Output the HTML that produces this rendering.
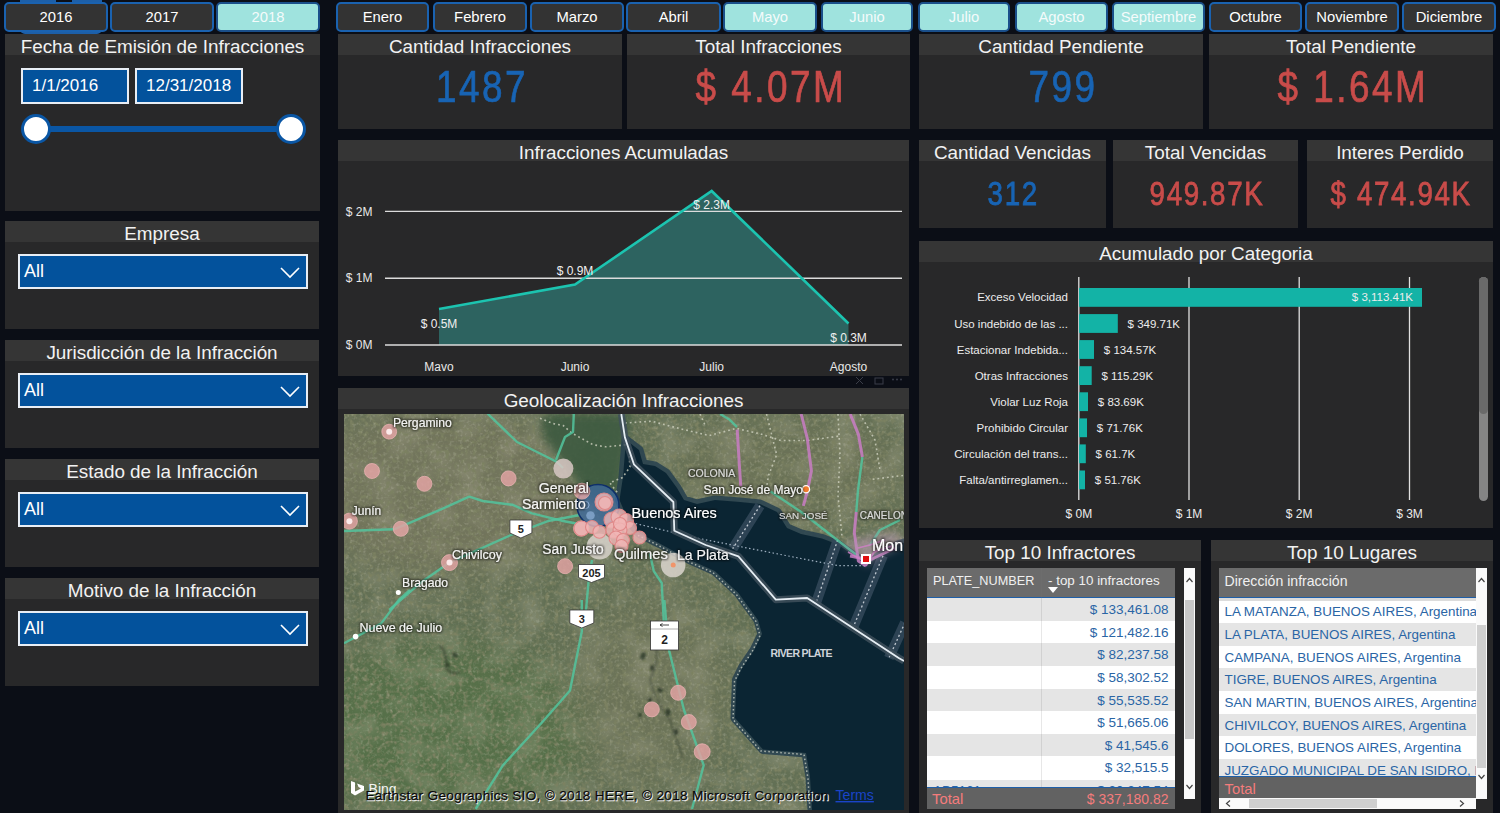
<!DOCTYPE html>
<html><head><meta charset="utf-8">
<style>
*{margin:0;padding:0;box-sizing:border-box}
html,body{width:1500px;height:813px;overflow:hidden;background:#0b0e16;font-family:"Liberation Sans",sans-serif;color:#fff}
.a{position:absolute}
.btn{position:absolute;top:2px;height:30px;background:#333333;border:2px solid #1a62b0;border-radius:5px;color:#fff;font-size:14.8px;text-align:center;line-height:26px}
.btn.sel{background:#9fe3de;border-color:#1a4f8a;color:#f4fbfb}
.pan{position:absolute;background:#282829}
.tt{position:absolute;left:0;right:0;top:0;height:21px;background:#353535;text-align:center;font-size:18.9px;letter-spacing:-0.03px;line-height:25px;color:#f2f2f2;white-space:nowrap}
.kv{position:absolute;left:0;right:0;text-align:center;font-size:45px;line-height:50px;white-space:nowrap}
.kv span{display:inline-block;transform:scaleX(0.82);letter-spacing:3px;-webkit-text-stroke:0.7px currentColor}
.blue{color:#1864b4}
.red{color:#c94c4a}
.dd{position:absolute;left:13px;width:290px;height:35px;background:#03529c;border:2px solid #e8eef5;font-size:18px;line-height:30px;padding-left:4px;color:#fff}
.tv{font-size:13.5px;color:#2a65a5;white-space:nowrap}
.th{color:#f0f0f0;white-space:nowrap}
.dd svg{position:absolute;right:6px;top:11px}
</style></head>
<body>
<!-- year buttons -->
<div class="a" style="left:20px;top:0;width:82px;height:33.5px;background:#1d5fa8;border-radius:0 0 5px 5px"></div><div class="a" style="left:56px;top:0;width:16px;height:2px;background:#0b0e16"></div>
<div class="btn" style="left:4px;width:104px">2016</div>
<div class="btn" style="left:110px;width:104px">2017</div>
<div class="btn sel" style="left:216px;width:104px">2018</div>
<!-- month buttons -->
<div class="btn" style="left:336px;width:93px">Enero</div>
<div class="btn" style="left:433px;width:94px">Febrero</div>
<div class="btn" style="left:530px;width:94px">Marzo</div>
<div class="btn" style="left:626px;width:95px">Abril</div>
<div class="btn sel" style="left:723px;width:94px">Mayo</div>
<div class="btn sel" style="left:821px;width:92px">Junio</div>
<div class="btn sel" style="left:918px;width:92px">Julio</div>
<div class="btn sel" style="left:1015px;width:93px">Agosto</div>
<div class="btn sel" style="left:1112px;width:93px">Septiembre</div>
<div class="btn" style="left:1209px;width:93px">Octubre</div>
<div class="btn" style="left:1305px;width:94px">Noviembre</div>
<div class="btn" style="left:1402px;width:94px">Diciembre</div>

<!-- Fecha panel -->
<div class="pan" style="left:5px;top:34px;width:315px;height:177px">
  <div class="tt">Fecha de Emisión de Infracciones</div>
  <div class="a" style="left:16px;top:34px;width:108px;height:36px;background:#03529c;border:2px solid #e8eef5;font-size:17px;line-height:32px;padding-left:9px">1/1/2016</div>
  <div class="a" style="left:130px;top:34px;width:108px;height:36px;background:#03529c;border:2px solid #e8eef5;font-size:17px;line-height:32px;padding-left:9px">12/31/2018</div>
  <div class="a" style="left:31px;top:92px;width:255px;height:6px;background:#0a56a4"></div>
  <div class="a" style="left:16px;top:79.5px;width:30px;height:30px;border-radius:50%;background:#fff;border:3.5px solid #0a56a4"></div>
  <div class="a" style="left:271px;top:79.5px;width:30px;height:30px;border-radius:50%;background:#fff;border:3.5px solid #0a56a4"></div>
</div>

<!-- filter panels -->
<div class="pan" style="left:5px;top:221px;width:314px;height:108px">
  <div class="tt">Empresa</div>
  <div class="dd" style="top:33px">All<svg width="20" height="12" viewBox="0 0 20 12"><path d="M1 1 L10 10 L19 1" fill="none" stroke="#fff" stroke-width="1.6"/></svg></div>
</div>
<div class="pan" style="left:5px;top:340px;width:314px;height:108px">
  <div class="tt">Jurisdicción de la Infracción</div>
  <div class="dd" style="top:33px">All<svg width="20" height="12" viewBox="0 0 20 12"><path d="M1 1 L10 10 L19 1" fill="none" stroke="#fff" stroke-width="1.6"/></svg></div>
</div>
<div class="pan" style="left:5px;top:459px;width:314px;height:108px">
  <div class="tt">Estado de la Infracción</div>
  <div class="dd" style="top:33px">All<svg width="20" height="12" viewBox="0 0 20 12"><path d="M1 1 L10 10 L19 1" fill="none" stroke="#fff" stroke-width="1.6"/></svg></div>
</div>
<div class="pan" style="left:5px;top:578px;width:314px;height:108px">
  <div class="tt">Motivo de la Infracción</div>
  <div class="dd" style="top:33px">All<svg width="20" height="12" viewBox="0 0 20 12"><path d="M1 1 L10 10 L19 1" fill="none" stroke="#fff" stroke-width="1.6"/></svg></div>
</div>

<!-- KPI row 1 -->
<div class="pan" style="left:338px;top:34px;width:284px;height:95px">
  <div class="tt">Cantidad Infracciones</div>
  <div class="kv blue" style="top:28px;left:5px"><span>1487</span></div>
</div>
<div class="pan" style="left:627px;top:34px;width:283px;height:95px">
  <div class="tt">Total Infracciones</div>
  <div class="kv red" style="top:28px;left:4px"><span>$ 4.07M</span></div>
</div>
<div class="pan" style="left:919px;top:34px;width:284px;height:95px">
  <div class="tt">Cantidad Pendiente</div>
  <div class="kv blue" style="top:28px;left:5px"><span>799</span></div>
</div>
<div class="pan" style="left:1209px;top:34px;width:284px;height:95px">
  <div class="tt">Total Pendiente</div>
  <div class="kv red" style="top:28px;left:4px"><span>$ 1.64M</span></div>
</div>
<!-- KPI row 2 -->
<div class="pan" style="left:919px;top:140px;width:187px;height:88px">
  <div class="tt">Cantidad Vencidas</div>
  <div class="kv blue" style="top:33px;left:2px;font-size:33.8px;line-height:40px"><span style="letter-spacing:2px;transform:scaleX(0.82);-webkit-text-stroke:0.8px currentColor">312</span></div>
</div>
<div class="pan" style="left:1113px;top:140px;width:185px;height:88px">
  <div class="tt">Total Vencidas</div>
  <div class="kv red" style="top:33px;left:2px;font-size:33.8px;line-height:40px"><span style="letter-spacing:2px;transform:scaleX(0.82);-webkit-text-stroke:0.8px currentColor">949.87K</span></div>
</div>
<div class="pan" style="left:1307px;top:140px;width:186px;height:88px">
  <div class="tt">Interes Perdido</div>
  <div class="kv red" style="top:33px;left:2px;font-size:33.8px;line-height:40px"><span style="letter-spacing:2px;transform:scaleX(0.82);-webkit-text-stroke:0.8px currentColor">$ 474.94K</span></div>
</div>


<div class="pan" style="left:338px;top:140px;width:571px;height:236px">
  <div class="tt">Infracciones Acumuladas</div>
</div>
<svg class="a" style="left:0;top:0" width="1500" height="400" viewBox="0 0 1500 400">
  <g font-family="Liberation Sans" font-size="12" fill="#e8e8e8">
    <polygon points="439,309 575,284.6 711.7,191 848.5,323.5 848.5,345 439,345" fill="#2d6360"/>
    <line x1="385" y1="211.4" x2="902" y2="211.4" stroke="#dcdcdc" stroke-width="1.4"/>
    <line x1="385" y1="278.2" x2="902" y2="278.2" stroke="#dcdcdc" stroke-width="1.4"/>
    <line x1="385" y1="345" x2="902" y2="345" stroke="#dcdcdc" stroke-width="1.4"/>
    <polyline points="439,309 575,284.6 711.7,191 848.5,323.5" fill="none" stroke="#1cc4b0" stroke-width="2.6" stroke-linejoin="miter"/>
    <text x="372.5" y="215.6" text-anchor="end">$ 2M</text>
    <text x="372.5" y="282.4" text-anchor="end">$ 1M</text>
    <text x="372.5" y="349.2" text-anchor="end">$ 0M</text>
    <text x="439" y="370.5" text-anchor="middle">Mavo</text>
    <text x="575" y="370.5" text-anchor="middle">Junio</text>
    <text x="711.7" y="370.5" text-anchor="middle">Julio</text>
    <text x="848.5" y="370.5" text-anchor="middle">Agosto</text>
    <text x="439" y="327.7" text-anchor="middle" fill="#f0f0f0">$ 0.5M</text>
    <text x="575" y="275.2" text-anchor="middle" fill="#f0f0f0">$ 0.9M</text>
    <text x="711.7" y="208.9" text-anchor="middle" fill="#f0f0f0">$ 2.3M</text>
    <text x="848.5" y="341.5" text-anchor="middle" fill="#f0f0f0">$ 0.3M</text>
  </g>
</svg>

<div class="pan" style="left:338px;top:387.5px;width:571px;height:425.5px">
  <div class="tt">Geolocalización Infracciones</div>
</div>
<svg class="a" style="left:852px;top:374px" width="56" height="14"><g stroke="#3a3d48" stroke-width="1" fill="none"><path d="M4 3 L11 10 M11 3 L4 10"/><rect x="23" y="4" width="8" height="6"/></g><g fill="#3a3d48"><circle cx="41" cy="5.5" r="1"/><circle cx="45" cy="5.5" r="1"/><circle cx="49" cy="5.5" r="1"/></g></svg>
<!--MAPSTART--><svg class="a" style="left:344px;top:414px" width="560" height="396" viewBox="344 414 560 396">
<defs>
<filter id="tex" x="0" y="0" width="100%" height="100%"><feTurbulence type="fractalNoise" baseFrequency="0.22" numOctaves="2" seed="7"/><feColorMatrix type="matrix" values="0 0 0 0 0.2  0 0 0 0 0.22  0 0 0 0 0.12  0 0 0 -3.2 1.7"/></filter>
<filter id="tex2" x="0" y="0" width="100%" height="100%"><feTurbulence type="fractalNoise" baseFrequency="0.3" numOctaves="2" seed="21"/><feColorMatrix type="matrix" values="0 0 0 0 0.62  0 0 0 0 0.62  0 0 0 0 0.5  0 0 0 0.8 -0.42"/></filter>
<filter id="tex3" x="0" y="0" width="100%" height="100%"><feTurbulence type="fractalNoise" baseFrequency="0.035" numOctaves="2" seed="11"/><feColorMatrix type="matrix" values="0 0 0 0 0.52  0 0 0 0 0.5  0 0 0 0 0.38  0.7 0 0 0 -0.3"/></filter>
<filter id="blur1" x="-50%" y="-50%" width="200%" height="200%"><feGaussianBlur stdDeviation="1.2"/></filter>
<filter id="blur2" x="-30%" y="-30%" width="160%" height="160%"><feGaussianBlur stdDeviation="4"/></filter>
<filter id="blur4"><feGaussianBlur stdDeviation="18"/></filter>
<filter id="halo" x="-20%" y="-50%" width="140%" height="200%"><feMorphology operator="dilate" radius="1.2" in="SourceAlpha" result="d"/><feGaussianBlur in="d" stdDeviation="1"/><feComponentTransfer><feFuncA type="linear" slope="0.55"/></feComponentTransfer><feMerge><feMergeNode/><feMergeNode in="SourceGraphic"/></feMerge></filter>
</defs>
<rect x="344" y="414" width="560" height="396" fill="#637055"/>
<g filter="url(#blur4)">
<ellipse cx="440" cy="490" rx="140" ry="85" fill="#72745b"/>
<ellipse cx="440" cy="730" rx="150" ry="90" fill="#577049"/>
<ellipse cx="650" cy="690" rx="80" ry="90" fill="#6c7358"/>
<ellipse cx="790" cy="470" rx="120" ry="55" fill="#6b7256"/>
</g>
<rect x="344" y="414" width="560" height="396" filter="url(#tex3)"/>
<rect x="344" y="414" width="560" height="396" filter="url(#tex)"/>
<rect x="344" y="414" width="560" height="396" filter="url(#tex2)"/>
<ellipse cx="643" cy="656" rx="2.5" ry="4" transform="rotate(20 643 656)" fill="#1f2a1e" opacity="0.7" filter="url(#blur1)"/>
<ellipse cx="652" cy="668" rx="2" ry="3" transform="rotate(0 652 668)" fill="#1f2a1e" opacity="0.7" filter="url(#blur1)"/>
<ellipse cx="660" cy="690" rx="3" ry="2" transform="rotate(30 660 690)" fill="#1f2a1e" opacity="0.7" filter="url(#blur1)"/>
<ellipse cx="668" cy="712" rx="2.5" ry="3.5" transform="rotate(0 668 712)" fill="#1f2a1e" opacity="0.7" filter="url(#blur1)"/>
<ellipse cx="650" cy="700" rx="2" ry="2.5" transform="rotate(0 650 700)" fill="#1f2a1e" opacity="0.7" filter="url(#blur1)"/>
<ellipse cx="676" cy="732" rx="2" ry="3" transform="rotate(0 676 732)" fill="#1f2a1e" opacity="0.7" filter="url(#blur1)"/>
<ellipse cx="640" cy="715" rx="1.8" ry="2.2" transform="rotate(0 640 715)" fill="#1f2a1e" opacity="0.7" filter="url(#blur1)"/>
<ellipse cx="665" cy="645" rx="2" ry="3" transform="rotate(-20 665 645)" fill="#1f2a1e" opacity="0.7" filter="url(#blur1)"/>
<ellipse cx="455" cy="655" rx="3" ry="2" transform="rotate(40 455 655)" fill="#1f2a1e" opacity="0.7" filter="url(#blur1)"/>
<ellipse cx="448" cy="665" rx="2.5" ry="1.5" transform="rotate(30 448 665)" fill="#1f2a1e" opacity="0.7" filter="url(#blur1)"/>
<path d="M440 645 Q448 655 446 668 Q452 676 460 672" stroke="#2a3325" stroke-width="2.4" fill="none" opacity="0.5" filter="url(#blur1)"/>
<path d="M655 640 Q660 660 650 680 Q655 700 670 720 Q676 740 684 760" stroke="#2a3325" stroke-width="2" fill="none" opacity="0.4" filter="url(#blur1)"/>
<polygon points="556.0,414.0 632.0,414.0 628.0,440.0 623.0,477.0 616.0,500.0 600.0,505.0 585.0,498.0 570.0,470.0 556.0,455.0 545.0,440.0 540.0,418.0" fill="#3c5a3f" opacity="0.9" filter="url(#blur2)"/>
<polygon points="626.0,440.0 639.0,450.0 643.0,464.0 655.0,466.0 666.0,473.0 677.0,488.0 684.0,500.0 697.0,504.0 715.0,500.0 740.0,502.0 760.0,504.0 777.0,512.0 787.0,528.0 801.0,534.0 822.0,538.5 838.0,544.6 850.0,553.0 862.0,561.0 866.5,566.0 883.0,553.0 899.0,544.6 904.0,543.0 904.0,810.0 812.0,810.0 810.0,777.0 806.0,753.0 763.0,749.5 735.0,718.0 736.5,680.0 742.4,667.6 754.2,650.0 762.0,634.0 758.0,620.0 738.4,593.0 714.8,571.0 689.0,559.4 659.7,543.6 640.0,533.8 628.0,520.0 619.5,500.0 623.0,477.0" fill="#0b2533" stroke="#2a4350" stroke-width="9" stroke-linejoin="round" opacity="0.9"/>
<polygon points="626.0,440.0 639.0,450.0 643.0,464.0 655.0,466.0 666.0,473.0 677.0,488.0 684.0,500.0 697.0,504.0 715.0,500.0 740.0,502.0 760.0,504.0 777.0,512.0 787.0,528.0 801.0,534.0 822.0,538.5 838.0,544.6 850.0,553.0 862.0,561.0 866.5,566.0 883.0,553.0 899.0,544.6 904.0,543.0 904.0,810.0 812.0,810.0 810.0,777.0 806.0,753.0 763.0,749.5 735.0,718.0 736.5,680.0 742.4,667.6 754.2,650.0 762.0,634.0 758.0,620.0 738.4,593.0 714.8,571.0 689.0,559.4 659.7,543.6 640.0,533.8 628.0,520.0 619.5,500.0 623.0,477.0" fill="#0b2533"/>
<path d="M640.0 533.8 L659.7 543.6 L689.0 559.4 L714.8 571.0 L738.4 593.0 L758.0 620.0 L762.0 634.0 L754.2 650.0 L742.4 667.6 L736.5 680.0 L735.0 718.0 L763.0 749.5 L806.0 753.0 L810.0 777.0 L812.0 810.0" fill="none" stroke="#c9cfc4" stroke-width="1.5" stroke-dasharray="1.5 2.5" transform="translate(-2,1.5)" opacity="0.8"/>
<path d="M837.7 540.0 L816.0 603.0" fill="none" stroke="#34495a" stroke-width="10" opacity="0.85"/>
<path d="M837.7 540.0 L816.0 603.0" fill="none" stroke="#c0c8d0" stroke-width="1.3" stroke-dasharray="2 2.5"/>
<path d="M883.0 555.7 L853.5 626.6" fill="none" stroke="#34495a" stroke-width="10" opacity="0.85"/>
<path d="M883.0 555.7 L853.5 626.6" fill="none" stroke="#c0c8d0" stroke-width="1.3" stroke-dasharray="2 2.5"/>
<path d="M905.0 622.6 L888.9 658.0" fill="none" stroke="#34495a" stroke-width="10" opacity="0.85"/>
<path d="M905.0 622.6 L888.9 658.0" fill="none" stroke="#c0c8d0" stroke-width="1.3" stroke-dasharray="2 2.5"/>
<path d="M760.0 505.6 L732.7 548.7" fill="none" stroke="#34495a" stroke-width="10" opacity="0.85"/>
<path d="M760.0 505.6 L732.7 548.7" fill="none" stroke="#c0c8d0" stroke-width="1.3" stroke-dasharray="2 2.5"/>
<path d="M635.7 523.6 L696.8 538.0 L760.0 550.5 L837.7 565.6 L866.0 565.6" fill="none" stroke="#9fb0c0" stroke-width="1.2" stroke-dasharray="1.5 2.5"/>
<path d="M540.0 418.2 L552.7 423.5 L563.3 425.6 L571.7 433.0 L592.9 444.7 L605.6 446.8 L627.8 444.7" fill="none" stroke="#cfd2c0" stroke-width="1.6" stroke-dasharray="1.8 3" opacity="0.8"/>
<path d="M628.9 451.0 L630.0 467.0 L622.5 477.5 L609.8 482.8 L617.2 492.3" fill="none" stroke="#cfd2c0" stroke-width="1.6" stroke-dasharray="1.8 3" opacity="0.8"/>
<path d="M625.0 423.0 L651.9 421.2 L678.8 428.4 L709.3 435.6 L736.3 428.4 L760.0 433.8 L780.8 440.5 L807.3 440.5 L840.0 436.0" fill="none" stroke="#cfd2c0" stroke-width="1.6" stroke-dasharray="1.8 3" opacity="0.8"/>
<path d="M766.5 414.0 L776.7 454.8 L768.6 475.2 L766.5 487.5" fill="none" stroke="#cfd2c0" stroke-width="1.6" stroke-dasharray="1.8 3" opacity="0.8"/>
<path d="M838.0 414.0 L840.0 454.8 L838.0 495.6 L842.0 536.4" fill="none" stroke="#cfd2c0" stroke-width="1.6" stroke-dasharray="1.8 3" opacity="0.8"/>
<path d="M872.7 479.3 L905.0 475.2" fill="none" stroke="#cfd2c0" stroke-width="1.6" stroke-dasharray="1.8 3" opacity="0.8"/>
<path d="M860.0 414.0 L875.0 440.0 L880.0 470.0" fill="none" stroke="#cfd2c0" stroke-width="1.6" stroke-dasharray="1.8 3" opacity="0.8"/>
<path d="M700.0 414.0 L705.0 425.0" fill="none" stroke="#cfd2c0" stroke-width="1.6" stroke-dasharray="1.8 3" opacity="0.8"/>
<path d="M621.3 414.0 L624.9 437.4 L633.9 464.3 L673.4 502.0 L674.3 530.8 L705.7 545.0 L738.4 556.4 L775.8 599.7 L807.2 598.0 L898.7 658.0 L904.0 661.0" fill="none" stroke="#3f505c" stroke-width="7" stroke-linejoin="round" opacity="0.85"/>
<path d="M621.3 414.0 L624.9 437.4 L633.9 464.3 L673.4 502.0 L674.3 530.8 L705.7 545.0 L738.4 556.4 L775.8 599.7 L807.2 598.0 L898.7 658.0 L904.0 661.0" fill="none" stroke="#e6eef4" stroke-width="1.8" stroke-linejoin="round"/>
<path d="M487.6 413.7 L517.0 442.0 L556.5 461.7 L563.0 468.0" fill="none" stroke="#52c49e" stroke-width="2.4" stroke-linejoin="round" opacity="0.85"/>
<path d="M573.8 414.0 L573.0 432.0 L565.0 437.0 L556.0 460.0" fill="none" stroke="#52c49e" stroke-width="2.4" stroke-linejoin="round" opacity="0.85"/>
<path d="M344.0 531.0 L394.0 529.3 L409.0 523.2 L443.3 508.4 L469.2 496.6 L482.7 501.0 L512.2 504.7 L532.0 513.3 L561.5 520.7 L590.0 526.0" fill="none" stroke="#52c49e" stroke-width="2.4" stroke-linejoin="round" opacity="0.85"/>
<path d="M389.2 610.0 L421.2 582.2 L449.5 562.6 L509.8 535.5 L549.2 520.7 L580.0 515.0" fill="none" stroke="#52c49e" stroke-width="2.4" stroke-linejoin="round" opacity="0.85"/>
<path d="M586.0 610.0 L588.5 582.2 L592.0 560.0" fill="none" stroke="#52c49e" stroke-width="2.4" stroke-linejoin="round" opacity="0.85"/>
<path d="M581.8 600.0 L581.8 631.5 L570.0 690.5 L542.4 722.0 L503.0 765.2 L475.6 809.0" fill="none" stroke="#52c49e" stroke-width="2.4" stroke-linejoin="round" opacity="0.85"/>
<path d="M664.4 600.0 L668.3 647.2 L684.0 710.0 L703.7 765.2 L692.0 809.0" fill="none" stroke="#52c49e" stroke-width="2.4" stroke-linejoin="round" opacity="0.85"/>
<path d="M344.0 643.3 L381.0 623.6 L398.8 600.0 L410.0 590.0" fill="none" stroke="#52c49e" stroke-width="2.4" stroke-linejoin="round" opacity="0.85"/>
<path d="M649.8 553.5 L653.8 571.2 L661.7 583.0 L663.6 618.4 L664.4 640.0" fill="none" stroke="#52c49e" stroke-width="2.4" stroke-linejoin="round" opacity="0.85"/>
<path d="M770.6 491.6 L801.2 512.0 L846.0 546.7 L858.0 556.0" fill="none" stroke="#52c49e" stroke-width="2.4" stroke-linejoin="round" opacity="0.85"/>
<path d="M720.0 414.0 L729.8 419.8 L737.0 427.2" fill="none" stroke="#52c49e" stroke-width="2.4" stroke-linejoin="round" opacity="0.85"/>
<path d="M862.4 457.0 L858.0 490.0 L856.3 512.0" fill="none" stroke="#52c49e" stroke-width="2.4" stroke-linejoin="round" opacity="0.85"/>
<path d="M900.0 520.0 L880.0 530.0 L870.0 545.0" fill="none" stroke="#52c49e" stroke-width="2.4" stroke-linejoin="round" opacity="0.85"/>
<path d="M801.2 414.0 L807.3 438.5 L811.4 471.0 L807.3 491.6 L803.3 505.8" fill="none" stroke="#c97cc4" stroke-width="3" stroke-linejoin="round" opacity="0.85"/>
<path d="M850.2 414.0 L858.4 434.4 L862.4 457.0" fill="none" stroke="#c97cc4" stroke-width="3" stroke-linejoin="round" opacity="0.85"/>
<path d="M856.3 512.0 L854.3 532.4 L858.4 561.0 L866.0 566.0" fill="none" stroke="#c97cc4" stroke-width="3" stroke-linejoin="round" opacity="0.85"/>
<path d="M737.2 429.7 L739.6 469.0 L740.8 486.3" fill="none" stroke="#c97cc4" stroke-width="3" stroke-linejoin="round" opacity="0.85"/>
<path d="M850.0 556.0 L870.0 560.0 L895.0 548.0" fill="none" stroke="#c97cc4" stroke-width="3" stroke-linejoin="round" opacity="0.85"/>
<path d="M842 545 L858 553 L866 566 L880 556 L900 546 L904 540 L895 532 L875 535 L860 538 Z" fill="#b89ab4" opacity="0.55" filter="url(#blur2)"/>
<path d="M848 552 L862 560 M866 566 L874 552 L892 546 M858 548 L870 545 L885 540" stroke="#d27fc8" stroke-width="1.6" fill="none" opacity="0.8"/>
<circle cx="598" cy="505.5" r="21" fill="#3c6aa0" fill-opacity="0.75" stroke="#0e2f6a" stroke-width="1.5"/>
<circle cx="585.5" cy="505" r="3.6" fill="none" stroke="#8fb0d8" stroke-width="1"/><circle cx="590.5" cy="515.5" r="4.3" fill="#8fb0d8" opacity="0.7"/>
<circle cx="389.2" cy="431.7" r="7.4" fill="#e3a3a3" fill-opacity="0.82" stroke="#e7b0b0" stroke-width="0.8"/>
<circle cx="372" cy="471" r="7.5" fill="#e3a3a3" fill-opacity="0.82" stroke="#e7b0b0" stroke-width="0.8"/>
<circle cx="424.4" cy="483.8" r="7.5" fill="#e3a3a3" fill-opacity="0.82" stroke="#e7b0b0" stroke-width="0.8"/>
<circle cx="508.6" cy="478.4" r="7.5" fill="#e3a3a3" fill-opacity="0.82" stroke="#e7b0b0" stroke-width="0.8"/>
<circle cx="563.4" cy="468.6" r="10" fill="#d8c8c4" fill-opacity="0.85"/>
<circle cx="349.4" cy="521.2" r="8" fill="#e3a3a3" fill-opacity="0.82" stroke="#e7b0b0" stroke-width="0.8"/>
<circle cx="400.8" cy="528.8" r="7.5" fill="#e3a3a3" fill-opacity="0.82" stroke="#e7b0b0" stroke-width="0.8"/>
<circle cx="449.5" cy="562.6" r="8" fill="#e3a3a3" fill-opacity="0.82" stroke="#e7b0b0" stroke-width="0.8"/>
<circle cx="565.1" cy="566.2" r="7.5" fill="#e3a3a3" fill-opacity="0.82" stroke="#e7b0b0" stroke-width="0.8"/>
<circle cx="581.9" cy="491.2" r="8" fill="#e3a3a3" fill-opacity="0.82" stroke="#e7b0b0" stroke-width="0.8"/>
<circle cx="581.1" cy="528.6" r="7.5" fill="#e3a3a3" fill-opacity="0.82" stroke="#e7b0b0" stroke-width="0.8"/>
<circle cx="599.6" cy="546.6" r="13" fill="#d9d3cc" fill-opacity="0.85"/>
<circle cx="673.2" cy="565" r="12.3" fill="#d9d3cc" fill-opacity="0.85"/>
<circle cx="678.2" cy="692.8" r="7.5" fill="#e3a3a3" fill-opacity="0.82" stroke="#e7b0b0" stroke-width="0.8"/>
<circle cx="651.8" cy="709.4" r="7.5" fill="#e3a3a3" fill-opacity="0.82" stroke="#e7b0b0" stroke-width="0.8"/>
<circle cx="688.8" cy="722" r="7.5" fill="#e3a3a3" fill-opacity="0.82" stroke="#e7b0b0" stroke-width="0.8"/>
<circle cx="702.2" cy="751.8" r="8" fill="#e3a3a3" fill-opacity="0.82" stroke="#e7b0b0" stroke-width="0.8"/>
<circle cx="604" cy="502" r="9" fill="#f0b6b6" fill-opacity="0.82" stroke="#e08888" stroke-width="1.1"/>
<circle cx="605" cy="503" r="6.5" fill="#f0b6b6" fill-opacity="0.82" stroke="#e08888" stroke-width="1.1"/>
<circle cx="581.5" cy="528.5" r="7.5" fill="#f0b6b6" fill-opacity="0.82" stroke="#e08888" stroke-width="1.1"/>
<circle cx="592" cy="527" r="6.5" fill="#f0b6b6" fill-opacity="0.82" stroke="#e08888" stroke-width="1.1"/>
<circle cx="599.4" cy="531.8" r="6.5" fill="#f0b6b6" fill-opacity="0.82" stroke="#e08888" stroke-width="1.1"/>
<circle cx="612" cy="520" r="8" fill="#f0b6b6" fill-opacity="0.82" stroke="#e08888" stroke-width="1.1"/>
<circle cx="619" cy="517" r="8" fill="#f0b6b6" fill-opacity="0.82" stroke="#e08888" stroke-width="1.1"/>
<circle cx="626" cy="521" r="7.5" fill="#f0b6b6" fill-opacity="0.82" stroke="#e08888" stroke-width="1.1"/>
<circle cx="630" cy="528" r="6.5" fill="#f0b6b6" fill-opacity="0.82" stroke="#e08888" stroke-width="1.1"/>
<circle cx="614" cy="530" r="8" fill="#f0b6b6" fill-opacity="0.82" stroke="#e08888" stroke-width="1.1"/>
<circle cx="620" cy="530" r="7" fill="#f0b6b6" fill-opacity="0.82" stroke="#e08888" stroke-width="1.1"/>
<circle cx="616" cy="538" r="7" fill="#f0b6b6" fill-opacity="0.82" stroke="#e08888" stroke-width="1.1"/>
<circle cx="623" cy="540" r="6.5" fill="#f0b6b6" fill-opacity="0.82" stroke="#e08888" stroke-width="1.1"/>
<circle cx="621.5" cy="546" r="6.5" fill="#f0b6b6" fill-opacity="0.82" stroke="#e08888" stroke-width="1.1"/>
<circle cx="639.5" cy="537.5" r="6.5" fill="#f0b6b6" fill-opacity="0.82" stroke="#e08888" stroke-width="1.1"/>
<circle cx="620" cy="524" r="6.5" fill="#f0b6b6" fill-opacity="0.82" stroke="#e08888" stroke-width="1.1"/>
<circle cx="389.2" cy="431.7" r="3" fill="#fbeaea"/>
<circle cx="349.4" cy="521.2" r="3" fill="#fbeaea"/>
<circle cx="449.5" cy="562.6" r="3" fill="#fbeaea"/>
<circle cx="673.2" cy="565" r="2.5" fill="#f0956a"/>
<circle cx="398.3" cy="592.6" r="2.5" fill="#fff"/>
<circle cx="355.6" cy="636.6" r="2.8" fill="#fff"/>
<circle cx="806" cy="489.2" r="3.6" fill="#f27b2a" stroke="#fff" stroke-width="1.3"/>
<rect x="861" y="554" width="10" height="10" fill="#fff"/><rect x="863" y="556" width="6" height="6" fill="#e01010"/>
<g font-family="Liberation Sans">
<path d="M509.9 520.0 H531.9 V533.0 L520.9 538.0 L509.9 533.0 Z" fill="#fff" stroke="#333" stroke-width="0.8"/><text x="520.9" y="532.5" text-anchor="middle" font-size="11" font-weight="bold" fill="#222">5</text>
<path d="M578.5 564.5 H604.5 V577.5 L591.5 582.5 L578.5 577.5 Z" fill="#fff" stroke="#333" stroke-width="0.8"/><text x="591.5" y="577" text-anchor="middle" font-size="11" font-weight="bold" fill="#222">205</text>
<path d="M569.8 610.0 H593.8 V623.0 L581.8 628.0 L569.8 623.0 Z" fill="#fff" stroke="#333" stroke-width="0.8"/><text x="581.8" y="622.5" text-anchor="middle" font-size="11" font-weight="bold" fill="#222">3</text>
<rect x="650.5" y="621" width="28" height="29" fill="#fff" stroke="#333" stroke-width="0.8"/><line x1="651" y1="629" x2="678" y2="629" stroke="#999" stroke-width="0.8"/><path d="M660 625 H669 M660 625 l2.5 -1.5 M660 625 l2.5 1.5" stroke="#333" stroke-width="0.9" fill="none"/><text x="664.5" y="644" text-anchor="middle" font-size="12" font-weight="bold" fill="#222">2</text>
</g>
<g font-family="Liberation Sans" filter="url(#halo)">
<text x="392.9" y="426.5" font-size="12.2" fill="#f2f2f2">Pergamino</text>
<text x="351.8" y="515.3" font-size="12" fill="#f2f2f2">Junín</text>
<text x="452" y="558.5" font-size="12.5" fill="#f2f2f2">Chivilcoy</text>
<text x="402" y="586.5" font-size="12.2" fill="#f2f2f2">Bragado</text>
<text x="538.8" y="492.5" font-size="14.1" fill="#f4f4f4">General</text>
<text x="522" y="508.5" font-size="14" fill="#f4f4f4">Sarmiento</text>
<text x="542.3" y="554" font-size="13.8" fill="#f4f4f4">San Justo</text>
<text x="631.4" y="518" font-size="14.5" fill="#ffffff">Buenos Aires</text>
<text x="688" y="476.5" font-size="10.5" fill="#d8d8d8">COLONIA</text>
<text x="703.5" y="494.3" font-size="12" fill="#f2f2f2">San José de Mayo</text>
<text x="779" y="519.2" font-size="9.8" fill="#d8d8d8">SAN JOSÉ</text>
<text x="859.7" y="519.2" font-size="10" fill="#d8d8d8">CANELONES</text>
<text x="614" y="559.2" font-size="14.7" fill="#f0f0f0">Quilmes</text>
<text x="677" y="560" font-size="14.1" fill="#f4f4f4">La Plata</text>
<text x="872" y="551" font-size="16" fill="#ffffff">Mon</text>
<text x="359.5" y="631.8" font-size="12.5" fill="#f2f2f2">Nueve de Julio</text>
</g>
<text x="770.6" y="657" font-family="Liberation Sans" font-size="10.5" font-weight="bold" fill="#cfd4da" textLength="62">RIVER PLATE</text>
<path d="M351 781 l4 1.5 v9 l6 -3 l-2.5 -1.5 l-1.5 -3.5 l7 2.5 v4.5 l-9 5 l-4 -2.5 Z" fill="#fff"/>
<text x="368.6" y="794" font-family="Liberation Sans" font-size="14" fill="#f4f4f4">Bing</text>
<text x="366.2" y="800.8" font-family="Liberation Sans" font-size="13.6" fill="#f0f0f0" stroke="#f0f0f0" stroke-width="0.4" textLength="463">Earthstar Geographics SIO, © 2018 HERE, © 2018 Microsoft Corporation</text>
<text x="365.4" y="799.6" font-family="Liberation Sans" font-size="13.6" fill="#080808" stroke="#080808" stroke-width="0.25" textLength="463">Earthstar Geographics SIO, © 2018 HERE, © 2018 Microsoft Corporation</text>
<text x="835.5" y="800" font-family="Liberation Sans" font-size="14.1" fill="#1a44c8" text-decoration="underline">Terms</text>
</svg><!--MAPEND-->

<div class="pan" style="left:919px;top:241px;width:574px;height:287px">
  <div class="tt">Acumulado por Categoria</div>
</div>
<svg class="a" style="left:0;top:0" width="1500" height="540" viewBox="0 0 1500 540">
  <g font-family="Liberation Sans" font-size="11.5" fill="#ececec">
    <line x1="1078.8" y1="277" x2="1078.8" y2="500" stroke="#e0e0e0" stroke-width="1.3"/>
    <line x1="1189" y1="277" x2="1189" y2="500" stroke="#e0e0e0" stroke-width="1.3"/>
    <line x1="1299.2" y1="277" x2="1299.2" y2="500" stroke="#e0e0e0" stroke-width="1.3"/>
    <line x1="1409.5" y1="277" x2="1409.5" y2="500" stroke="#e0e0e0" stroke-width="1.3"/>
    <text x="1068" y="301.4" text-anchor="end">Exceso Velocidad</text>
    <rect x="1079" y="288.0" width="343.0" height="18.8" fill="#13b3a6"/>
    <text x="1413" y="301.4" text-anchor="end">$ 3,113.41K</text>
    <text x="1068" y="327.5" text-anchor="end">Uso indebido de las ...</text>
    <rect x="1079" y="314.1" width="38.8" height="18.8" fill="#13b3a6"/>
    <text x="1127.6" y="327.5">$ 349.71K</text>
    <text x="1068" y="353.5" text-anchor="end">Estacionar Indebida...</text>
    <rect x="1079" y="340.1" width="15.0" height="18.8" fill="#13b3a6"/>
    <text x="1103.8" y="353.5">$ 134.57K</text>
    <text x="1068" y="379.6" text-anchor="end">Otras Infracciones</text>
    <rect x="1079" y="366.2" width="12.7" height="18.8" fill="#13b3a6"/>
    <text x="1101.5" y="379.6">$ 115.29K</text>
    <text x="1068" y="405.7" text-anchor="end">Violar Luz Roja</text>
    <rect x="1079" y="392.3" width="9.0" height="18.8" fill="#13b3a6"/>
    <text x="1097.8" y="405.7">$ 83.69K</text>
    <text x="1068" y="431.8" text-anchor="end">Prohibido Circular</text>
    <rect x="1079" y="418.4" width="8.0" height="18.8" fill="#13b3a6"/>
    <text x="1096.8" y="431.8">$ 71.76K</text>
    <text x="1068" y="457.8" text-anchor="end">Circulación del trans...</text>
    <rect x="1079" y="444.4" width="6.8" height="18.8" fill="#13b3a6"/>
    <text x="1095.6" y="457.8">$ 61.7K</text>
    <text x="1068" y="483.9" text-anchor="end">Falta/antirreglamen...</text>
    <rect x="1079" y="470.5" width="6.0" height="18.8" fill="#13b3a6"/>
    <text x="1094.8" y="483.9">$ 51.76K</text>
    <text x="1078.8" y="518" text-anchor="middle" font-size="12">$ 0M</text>
    <text x="1189" y="518" text-anchor="middle" font-size="12">$ 1M</text>
    <text x="1299.2" y="518" text-anchor="middle" font-size="12">$ 2M</text>
    <text x="1409.5" y="518" text-anchor="middle" font-size="12">$ 3M</text>
    <rect x="1479" y="277" width="9" height="224" rx="4.5" fill="#858585"/>
    <rect x="1479" y="277" width="9" height="137" rx="4.5" fill="#6a6a6a"/>
  </g>
</svg>


<div class="pan" style="left:919px;top:540px;width:282px;height:273px">
  <div class="tt">Top 10 Infractores</div>
</div>
<div class="a" style="left:927px;top:567.6px;width:247.5px;height:241px;overflow:hidden;background:#e5e5e5">
  <div class="a" style="left:0;top:30.40px;width:247.5px;height:23.2px;background:#e5e5e5"></div>
  <div class="a tv" style="right:6px;top:30.40px;height:22.6px;line-height:23.6px">$ 133,461.08</div>
  <div class="a" style="left:0;top:53.04px;width:247.5px;height:23.2px;background:#ffffff"></div>
  <div class="a tv" style="right:6px;top:53.04px;height:22.6px;line-height:23.6px">$ 121,482.16</div>
  <div class="a" style="left:0;top:75.68px;width:247.5px;height:23.2px;background:#e5e5e5"></div>
  <div class="a tv" style="right:6px;top:75.68px;height:22.6px;line-height:23.6px">$ 82,237.58</div>
  <div class="a" style="left:0;top:98.32px;width:247.5px;height:23.2px;background:#ffffff"></div>
  <div class="a tv" style="right:6px;top:98.32px;height:22.6px;line-height:23.6px">$ 58,302.52</div>
  <div class="a" style="left:0;top:120.96px;width:247.5px;height:23.2px;background:#e5e5e5"></div>
  <div class="a tv" style="right:6px;top:120.96px;height:22.6px;line-height:23.6px">$ 55,535.52</div>
  <div class="a" style="left:0;top:143.60px;width:247.5px;height:23.2px;background:#ffffff"></div>
  <div class="a tv" style="right:6px;top:143.60px;height:22.6px;line-height:23.6px">$ 51,665.06</div>
  <div class="a" style="left:0;top:166.24px;width:247.5px;height:23.2px;background:#e5e5e5"></div>
  <div class="a tv" style="right:6px;top:166.24px;height:22.6px;line-height:23.6px">$ 41,545.6</div>
  <div class="a" style="left:0;top:188.88px;width:247.5px;height:23.2px;background:#ffffff"></div>
  <div class="a tv" style="right:6px;top:188.88px;height:22.6px;line-height:23.6px">$ 32,515.5</div>
  <div class="a tv" style="left:6px;top:211.5px;height:22.6px;line-height:23.6px">AB5161</div>
  <div class="a tv" style="right:6px;top:211.5px;height:22.6px;line-height:23.6px">$ 30,247.54</div>
  <div class="a" style="left:0;top:0;width:247.5px;height:29px;background:#6b6b6b"></div>
  <div class="a" style="left:0;top:29px;width:247.5px;height:1.6px;background:#1f5fa8"></div>
  <div class="a th" style="left:6px;top:0;line-height:26px;font-size:12.7px">PLATE_NUMBER</div>
  <div class="a th" style="left:121px;top:0;line-height:26px;font-size:13.4px">- top 10 infractores</div>
  <svg class="a" style="left:121px;top:19px" width="10" height="6"><path d="M0 0 L10 0 L5 6 Z" fill="#fff"/></svg>
  <div class="a" style="left:113.5px;top:0;width:1px;height:241px;background:rgba(120,120,120,0.18)"></div>
  <div class="a" style="left:0;top:219px;width:247.5px;height:22px;background:#626262;border-top:1.5px solid #1f5fa8"></div>
  <div class="a" style="left:5px;top:221px;font-size:14.8px;line-height:21px;color:#f47c7c">Total</div>
  <div class="a" style="right:6px;top:221px;font-size:14px;line-height:21px;color:#f47c7c">$ 337,180.82</div>
</div>
<div class="a" style="left:1184px;top:567.6px;width:11px;height:231.6px;background:#fafafa"></div>
<div class="a" style="left:1185px;top:599.6px;width:9px;height:139.4px;background:#c8c8c8"></div>
<svg class="a" style="left:1184px;top:574px" width="11" height="225"><path d="M2.5 8 L5.5 4.5 L8.5 8" fill="none" stroke="#444" stroke-width="1.2"/><path d="M2.5 211 L5.5 214.5 L8.5 211" fill="none" stroke="#444" stroke-width="1.2"/></svg>


<div class="pan" style="left:1211px;top:540px;width:282px;height:273px">
  <div class="tt">Top 10 Lugares</div>
</div>
<div class="a" style="left:1218.5px;top:567.6px;width:257.5px;height:230.5px;overflow:hidden;background:#e5e5e5">
  <div class="a" style="left:0;top:32.90px;width:258px;height:23.2px;background:#ffffff"></div>
  <div class="a tv" style="left:6px;top:32.90px;height:22.6px;line-height:23.6px;font-size:13.4px">LA MATANZA, BUENOS AIRES, Argentina</div>
  <div class="a" style="left:0;top:55.54px;width:258px;height:23.2px;background:#e5e5e5"></div>
  <div class="a tv" style="left:6px;top:55.54px;height:22.6px;line-height:23.6px;font-size:13.4px">LA PLATA, BUENOS AIRES, Argentina</div>
  <div class="a" style="left:0;top:78.18px;width:258px;height:23.2px;background:#ffffff"></div>
  <div class="a tv" style="left:6px;top:78.18px;height:22.6px;line-height:23.6px;font-size:13.4px">CAMPANA, BUENOS AIRES, Argentina</div>
  <div class="a" style="left:0;top:100.82px;width:258px;height:23.2px;background:#e5e5e5"></div>
  <div class="a tv" style="left:6px;top:100.82px;height:22.6px;line-height:23.6px;font-size:13.4px">TIGRE, BUENOS AIRES, Argentina</div>
  <div class="a" style="left:0;top:123.46px;width:258px;height:23.2px;background:#ffffff"></div>
  <div class="a tv" style="left:6px;top:123.46px;height:22.6px;line-height:23.6px;font-size:13.4px">SAN MARTIN, BUENOS AIRES, Argentina</div>
  <div class="a" style="left:0;top:146.10px;width:258px;height:23.2px;background:#e5e5e5"></div>
  <div class="a tv" style="left:6px;top:146.10px;height:22.6px;line-height:23.6px;font-size:13.4px">CHIVILCOY, BUENOS AIRES, Argentina</div>
  <div class="a" style="left:0;top:168.74px;width:258px;height:23.2px;background:#ffffff"></div>
  <div class="a tv" style="left:6px;top:168.74px;height:22.6px;line-height:23.6px;font-size:13.4px">DOLORES, BUENOS AIRES, Argentina</div>
  <div class="a" style="left:0;top:191.38px;width:258px;height:23.2px;background:#e5e5e5"></div>
  <div class="a tv" style="left:6px;top:191.38px;height:22.6px;line-height:23.6px;font-size:13.4px">JUZGADO MUNICIPAL DE SAN ISIDRO, BUENOS AIRES</div>
  <div class="a" style="left:0;top:0;width:258px;height:29px;background:#6b6b6b"></div>
  <div class="a" style="left:0;top:29px;width:258px;height:1.6px;background:#1f5fa8"></div>
  <div class="a" style="left:0;top:30.6px;width:258px;height:2.4px;background:#dcdcdc"></div>
  <div class="a th" style="left:6px;top:0;line-height:26px;font-size:14.1px">Dirección infracción</div>
  <div class="a" style="left:0;top:208.5px;width:258px;height:22px;background:#626262;border-top:1.5px solid #1f5fa8"></div>
  <div class="a" style="left:6px;top:210px;font-size:14.8px;line-height:22px;color:#f47c7c">Total</div>
</div>
<div class="a" style="left:1476px;top:567.6px;width:10.5px;height:231px;background:#fafafa"></div>
<div class="a" style="left:1477px;top:625px;width:8.5px;height:143px;background:#cfcfcf"></div>
<svg class="a" style="left:1476px;top:574px" width="11" height="225"><path d="M2.5 8 L5.5 4.5 L8.5 8" fill="none" stroke="#444" stroke-width="1.2"/><path d="M2.5 201 L5.5 204.5 L8.5 201" fill="none" stroke="#444" stroke-width="1.2"/></svg>
<div class="a" style="left:1218.5px;top:798px;width:257.5px;height:10.5px;background:#fafafa"></div>
<div class="a" style="left:1249px;top:799px;width:128px;height:8.5px;background:#cfcfcf"></div>
<svg class="a" style="left:1218.5px;top:798px" width="258" height="11"><path d="M11 2.5 L7.5 5.5 L11 8.5" fill="none" stroke="#444" stroke-width="1.2"/><path d="M241 2.5 L244.5 5.5 L241 8.5" fill="none" stroke="#444" stroke-width="1.2"/></svg>

</body></html>
